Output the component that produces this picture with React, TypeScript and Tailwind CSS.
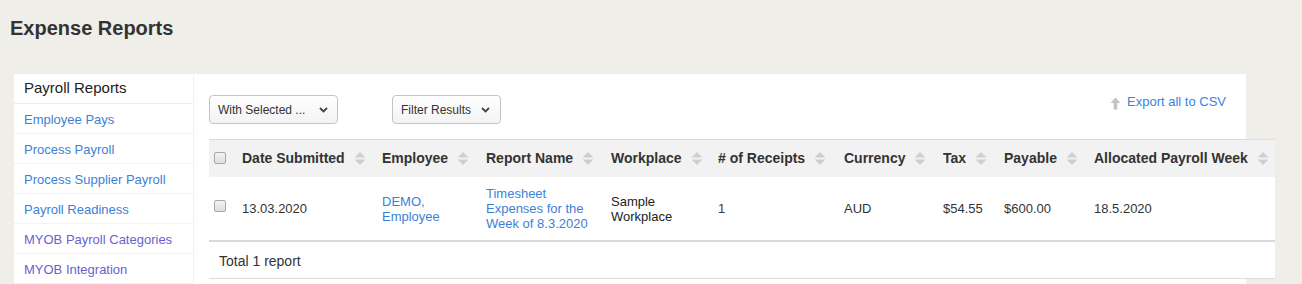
import React from "react";

const font = { fontFamily: '"Liberation Sans", Arial, sans-serif' };

function SortIcon() {
  return (
    <svg width="12" height="15" viewBox="0 0 12 15" className="ml-[9px] shrink-0">
      <path d="M6 1 L11.5 6.5 L0.5 6.5 Z" fill="#cfcfcf" />
      <path d="M6 14 L11.5 8.5 L0.5 8.5 Z" fill="#cfcfcf" />
    </svg>
  );
}

function Chevron() {
  return (
    <svg width="9" height="6" viewBox="0 0 9 6">
      <path d="M1 1 L4.5 4.5 L8 1" stroke="#444" strokeWidth="1.8" fill="none" />
    </svg>
  );
}

function Checkbox() {
  return (
    <span className="inline-block w-[12px] h-[12px] rounded-[2px] border border-[#a9a9a9] bg-gradient-to-b from-[#f4f4f4] to-[#dedede]" />
  );
}

const cols = [
  { label: "Date Submitted", w: 140 },
  { label: "Employee", w: 104 },
  { label: "Report Name", w: 125 },
  { label: "Workplace", w: 107 },
  { label: "# of Receipts", w: 126 },
  { label: "Currency", w: 99 },
  { label: "Tax", w: 61 },
  { label: "Payable", w: 90 },
  { label: "Allocated Payroll Week", w: 189 },
];

const sideItems = [
  { t: "Employee Pays", c: "text-[#3d7fd6]" },
  { t: "Process Payroll", c: "text-[#3d7fd6]" },
  { t: "Process Supplier Payroll", c: "text-[#3d7fd6]" },
  { t: "Payroll Readiness", c: "text-[#3d7fd6]" },
  { t: "MYOB Payroll Categories", c: "text-[#6a62cf]" },
  { t: "MYOB Integration", c: "text-[#6a62cf]" },
];

export default function App() {
  return (
    <div style={font} className="w-[1302px] h-[284px] overflow-hidden bg-[#f0eee9] text-[#333]">
      <h1 className="pl-[10px] pt-[16px] text-[20px] leading-[24px] font-bold text-[#333]">Expense Reports</h1>
      <div className="flex mt-[34px] pl-[14px]">
        {/* Sidebar */}
        <div className="w-[179px] bg-white shrink-0">
          <div className="h-[30px] flex items-center pl-[10px] text-[15px] text-[#222] border-b border-[#eeeeee]">
            Payroll Reports
          </div>
          {sideItems.map((s) => (
            <div key={s.t} className={`h-[30px] flex items-center pl-[10px] pt-[2px] text-[13px] border-b border-[#f3f3f3] ${s.c}`}>
              {s.t}
            </div>
          ))}
        </div>
        {/* Main panel */}
        <div className="w-[1053px] shrink-0 bg-white border-l border-[#f2f2f2] pl-[15px] h-[220px]">
          <div className="flex items-start h-[65px] pt-[21px]">
            <div className="w-[129px] h-[29px] rounded-[4px] border border-[#c4c4c4] bg-gradient-to-b from-white to-[#f3f3f3] flex items-center justify-between pl-[8px] pr-[9px] text-[12px] text-[#333]">
              <span>With Selected ...</span>
              <Chevron />
            </div>
            <div className="ml-[54px] w-[109px] h-[29px] rounded-[4px] border border-[#c4c4c4] bg-gradient-to-b from-white to-[#f3f3f3] flex items-center justify-between pl-[8px] pr-[10px] text-[12px] text-[#333]">
              <span>Filter Results</span>
              <Chevron />
            </div>
            <div className="ml-auto mr-[20px] flex items-center mt-[-3px] text-[13px] text-[#3d82dc]">
              <svg width="11" height="13" viewBox="0 0 11 13" className="mr-[6px] mt-[3px]">
                <path d="M5.5 0.5 L10.5 6 L7.3 6 L7.3 12.5 L3.7 12.5 L3.7 6 L0.5 6 Z" fill="#c4c4c4" />
              </svg>
              <span>Export all to CSV</span>
            </div>
          </div>
          <table className="border-collapse w-[1066px] table-fixed text-[13px]">
            <colgroup>
              <col style={{ width: 25 }} />
              {cols.map((c) => (
                <col key={c.label} style={{ width: c.w }} />
              ))}
            </colgroup>
            <thead>
              <tr className="bg-[#f2f2f2] border-t border-[#dcdcdc] h-[37px]">
                <th className="pl-[5px] text-left align-middle">
                  <div className="flex items-center h-[37px] pt-[1px]"><span className="-mt-[3px] flex"><Checkbox /></span></div>
                </th>
                {cols.map((c) => (
                  <th key={c.label} className="pl-[8px] text-left align-middle">
                    <div className="flex items-center font-bold text-[14px] text-[#333] whitespace-nowrap">
                      {c.label}
                      <SortIcon />
                    </div>
                  </th>
                ))}
              </tr>
            </thead>
            <tbody>
              <tr className="bg-white h-[64px] border-b-2 border-[#d9d9d9] leading-[15px]">
                <td className="pl-[5px] align-middle"><span className="flex -mt-[5px]"><Checkbox /></span></td>
                <td className="pl-[8px] align-middle text-[#333]">13.03.2020</td>
                <td className="pl-[8px] align-middle text-[#3d7fd6]">DEMO,<br />Employee</td>
                <td className="pl-[8px] align-middle text-[#3d7fd6]">Timesheet<br />Expenses for the<br />Week of 8.3.2020</td>
                <td className="pl-[8px] align-middle text-[#222]">Sample<br />Workplace</td>
                <td className="pl-[8px] align-middle text-[#4a3434]">1</td>
                <td className="pl-[8px] align-middle text-[#333]">AUD</td>
                <td className="pl-[8px] align-middle text-[#333]">$54.55</td>
                <td className="pl-[8px] align-middle text-[#333]">$600.00</td>
                <td className="pl-[8px] align-middle text-[#333]">18.5.2020</td>
              </tr>
              <tr className="bg-white h-[37px] border-b border-[#dcdcdc]">
                <td colSpan={10} className="pl-[10px] pt-[3px] align-middle text-[14px] text-[#333]">Total 1 report</td>
              </tr>
            </tbody>
          </table>
        </div>
      </div>
    </div>
  );
}
